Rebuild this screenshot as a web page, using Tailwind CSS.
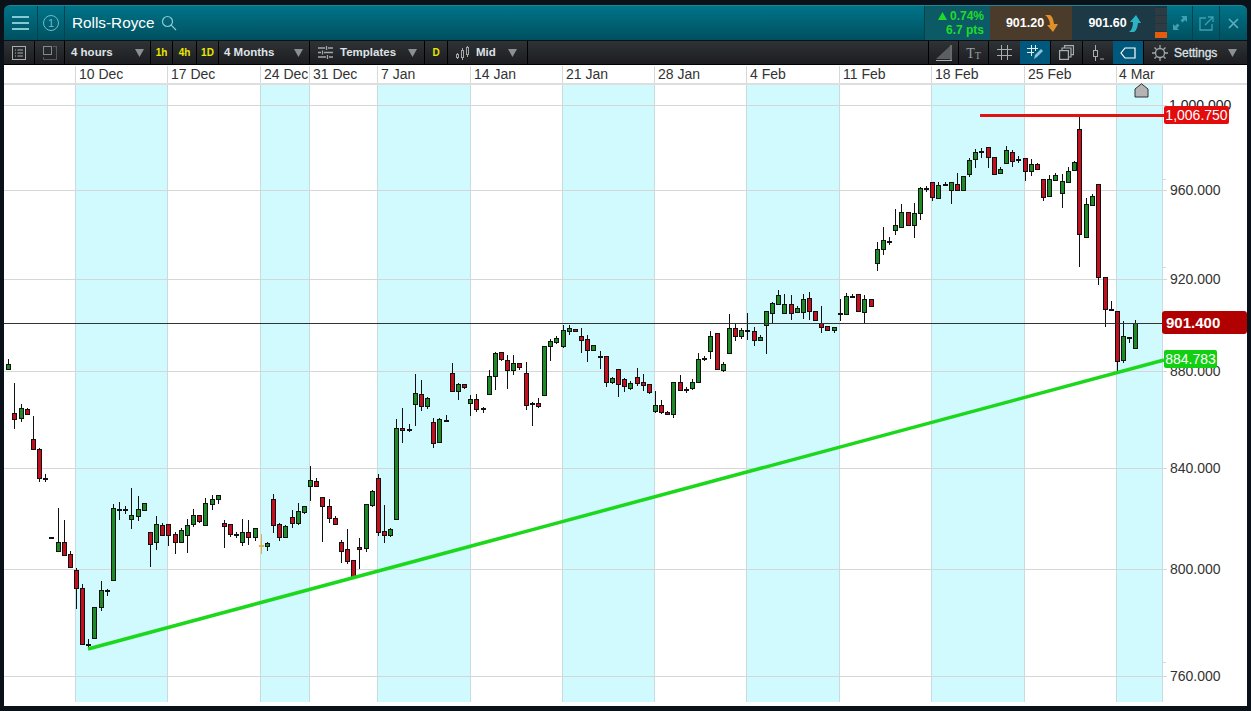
<!DOCTYPE html>
<html lang="en">
<head>
    <meta charset="UTF-8">
    <title>Rolls-Royce 4 hours chart</title>
    <script src="https://cdn.jsdelivr.net/npm/@tailwindcss/browser@4"></script>
</head>
<body class="bg-[#0a1118]">
<div class="w-[1251px] h-[711px] overflow-hidden flex flex-col pt-[5px] pb-[5px] pl-[4px] pr-[4px] font-['Liberation_Sans',Arial,sans-serif]">

    <!-- title bar -->
    <div class="h-[35px] shrink-0 flex rounded-tl-[6px] rounded-tr-[6px] overflow-hidden bg-gradient-to-b from-[#007489] to-[#00505f] border-t border-[#1b8796]">
        <div class="w-[34px] flex items-center justify-center border-r border-[#073f4c]">
            <svg width="17" height="14" viewBox="0 0 17 14" fill="#86c9d3"><rect y="0" width="17" height="2"/><rect y="6" width="17" height="2"/><rect y="12" width="17" height="2"/></svg>
        </div>
        <div class="w-[27px] flex items-center justify-center border-r border-[#073f4c]">
            <div class="w-[16px] h-[16px] rounded-full border border-[#6fbcc8] text-[#6fbcc8] text-[11px] leading-[14px] text-center">1</div>
        </div>
        <div class="pl-[7px] flex items-center text-white text-[15.3px]">Rolls-Royce</div>
        <div class="pl-[7px] flex items-center">
            <svg width="16" height="16" viewBox="0 0 16 16" fill="none" stroke="#8cc8d2" stroke-width="1.2"><circle cx="6.5" cy="6.5" r="5"/><path d="M10.2 10.2 15 15"/></svg>
        </div>
        <div class="flex-1"></div>
        <div class="w-[66px] flex flex-col items-end justify-center pr-[6px] bg-[#0c5a66] font-bold text-[12px] leading-[14px] text-[#1fdc2a] border-l border-[#073f4c]">
            <div class="flex items-center gap-[3px]"><svg width="9" height="8" viewBox="0 0 9 8" fill="#1fdc2a"><path d="M4.5 0 9 8H0z"/></svg>0.74%</div>
            <div>6.7 pts</div>
        </div>
        <div class="w-[82px] flex items-center justify-center gap-[1px] bg-[#4b3b2b] text-white font-bold text-[12.500px] pl-[2px]">
            901.20
            <svg width="13" height="17" viewBox="0 0 13 17" fill="#e0902a"><path d="M0 0h5c2 1 3.500 4 4 9h4l-5 8-6-7 3 0C5 6 3 2 0 0z"/></svg>
        </div>
        <div class="w-[83px] flex items-center justify-center gap-[1px] bg-[#1c3945] text-white font-bold text-[12.500px] pl-[2px]">
            901.60
            <svg width="13" height="17" viewBox="0 0 13 17" fill="#2ab4c4"><path d="M1 17h5c2-1 3.500-4 4-9h3L8 0 2 7l3 0C5 11 4 15 1 17z"/></svg>
        </div>
        <div class="w-[12px] flex flex-col gap-[1px] justify-center bg-[#123a47]">
            <div class="h-[7px] bg-[#2f3b40]"></div>
            <div class="h-[7px] bg-[#2f3b40]"></div>
            <div class="h-[7px] bg-[#2f3b40]"></div>
            <div class="h-[6px] bg-[#e85a0c]"></div>
        </div>
        <div class="w-[26px] flex items-center justify-center border-r border-[#073f4c]">
            <svg width="14" height="14" viewBox="0 0 14 14" fill="#3f9fb0"><path d="M8 0h6v6l-2-2-2.500 2.500-2-2L10 2zM6 14H0V8l2 2 2.500-2.500 2 2L4 12z"/></svg>
        </div>
        <div class="w-[27px] flex items-center justify-center border-r border-[#073f4c]">
            <svg width="15" height="15" viewBox="0 0 15 15" fill="none" stroke="#3f9fb0" stroke-width="1.300"><path d="M7 2H1v12h12V8M6 9l8-8M9 1h5v5"/></svg>
        </div>
        <div class="w-[27px] flex items-center justify-center">
            <svg width="11" height="11" viewBox="0 0 11 11" stroke="#5eb0be" stroke-width="1.600"><path d="M1 1l9 9M10 1l-9 9"/></svg>
        </div>
    </div>

    <!-- toolbar -->
    <div class="h-[24px] mt-[1px] shrink-0 flex items-stretch bg-gradient-to-b from-[#303336] to-[#1b1d20] border-b border-black text-[#dfe3e6] text-[11.500px] font-bold">
        <div class="w-[31px] flex items-center justify-center border-r border-black">
            <svg width="14" height="14" viewBox="0 0 14 14" fill="none" stroke="#a9adb0"><rect x=".5" y=".5" width="13" height="13"/><path d="M3 4h1M5.500 4H11M3 7h1M5.500 7H11M3 10h1M5.500 10H11"/></svg>
        </div>
        <div class="w-[30px] flex items-center justify-center border-r border-black">
            <svg width="14" height="14" viewBox="0 0 14 14" fill="none" stroke="#85898c"><rect x=".5" y=".5" width="8" height="8"/><path d="M10.500 .5h3v13h-13v-3" stroke-dasharray="1 1"/></svg>
        </div>
        <div class="w-[86px] flex items-center justify-between pl-[6px] pr-[6px] border-r border-black">4 hours
            <svg width="9" height="8" viewBox="0 0 9 8" fill="#8b8f92"><path d="M0 0h9L4.500 8z"/></svg>
        </div>
        <div class="w-[22px] flex items-center justify-center border-r border-black text-[#e8e800] text-[10px]">1h</div>
        <div class="w-[24px] flex items-center justify-center border-r border-black text-[#e8e800] text-[10px]">4h</div>
        <div class="w-[22px] flex items-center justify-center border-r border-black text-[#e8e800] text-[10px]">1D</div>
        <div class="w-[91px] flex items-center justify-between pl-[5px] pr-[6px] border-r border-black">4 Months
            <svg width="9" height="8" viewBox="0 0 9 8" fill="#8b8f92"><path d="M0 0h9L4.500 8z"/></svg>
        </div>
        <div class="w-[115px] flex items-center pl-[8px] pr-[7px] border-r border-black">
            <svg width="15" height="13" viewBox="0 0 15 13" stroke="#a3a7aa" stroke-width="1.300"><path d="M0 2h7M10 2h5M8.500 0v4M0 6.500h3M6 6.500h9M4.500 4.500v4M0 11h8M11 11h4M9.500 9v4"/></svg>
            <span class="ml-[7px]">Templates</span>
            <svg class="ml-auto" width="9" height="8" viewBox="0 0 9 8" fill="#8b8f92"><path d="M0 0h9L4.500 8z"/></svg>
        </div>
        <div class="w-[23px] flex items-center justify-center border-r border-black text-[#e8e800] text-[10px]">D</div>
        <div class="w-[80px] flex items-center pl-[7px] pr-[10px] border-r border-black">
            <svg width="15" height="14" viewBox="0 0 15 14" fill="none" stroke="#a3a7aa"><rect x="1.500" y="8.500" width="2" height="3"/><path d="M2.500 7v1M2.500 12v1"/><rect x="6.500" y="4.500" width="2" height="7"/><path d="M7.500 2v2M7.500 12v2"/><rect x="11.500" y="1.500" width="2" height="7"/><path d="M12.500 0v1M12.500 9v2"/></svg>
            <span class="ml-[6px]">Mid</span>
            <svg class="ml-auto" width="9" height="8" viewBox="0 0 9 8" fill="#8b8f92"><path d="M0 0h9L4.500 8z"/></svg>
        </div>
        <div class="flex-1"></div>
        <div class="w-[30px] flex items-center justify-center border-l border-black">
            <svg width="16" height="16" viewBox="0 0 16 16"><path d="M0 14 14 1v13z" fill="#5b5f62"/><path d="M0 15.500h16M15 0v16" stroke="#a9adb0"/></svg>
        </div>
        <div class="w-[30px] flex items-center justify-center border-l border-black font-['Liberation_Serif',serif] font-normal text-[#9a9ea1] text-[14px] pt-[2px]">T<span class="text-[10px] pt-[3px]">T</span></div>
        <div class="w-[32px] flex items-center justify-center border-l border-black">
            <svg width="15" height="15" viewBox="0 0 15 15" stroke="#a9adb0"><path d="M4.500 0v15M10.500 0v15M0 4.500h15M0 10.500h15"/></svg>
        </div>
        <div class="w-[30px] flex items-center justify-center bg-[#00597c]">
            <svg width="17" height="16" viewBox="0 0 17 16"><path d="M4.500 0v11M8.500 0v6M0 3.500h11M0 7.500h7" stroke="#e4eef2"/><path d="M7 14l1-4 6-6 2 2-6 6z" fill="#8fc4da"/></svg>
        </div>
        <div class="w-[32px] flex items-center justify-center border-l border-black">
            <svg width="15" height="15" viewBox="0 0 15 15" fill="none" stroke="#a9adb0" stroke-width="1.200"><rect x=".6" y="5.600" width="8.800" height="8.800"/><path d="M3 5V3h9v9h-2M5.500 2.500V.6h9v9h-2"/></svg>
        </div>
        <div class="w-[31px] flex items-center justify-center border-l border-black">
            <svg width="14" height="16" viewBox="0 0 14 16" fill="none" stroke="#a9adb0"><rect x="2.500" y="5.500" width="4" height="6"/><path d="M4.500 0v5M4.500 12v4M9 14h4" /></svg>
        </div>
        <div class="w-[30px] flex items-center justify-center bg-[#00597c]">
            <svg width="16" height="12" viewBox="0 0 16 12" fill="none" stroke="#ffffff" stroke-width="1.200"><path d="M5 1h10v10H5L1 6z"/></svg>
        </div>
        <div class="flex-1 max-w-[104px] w-[104px] flex items-center pl-[8px] pr-[10px] border-l border-black">
            <svg width="16" height="16" viewBox="0 0 16 16" fill="none" stroke="#a3a7aa" stroke-width="1.300"><circle cx="8" cy="8" r="4.500"/><path d="M8 0v3M8 13v3M0 8h3M13 8h3M2.500 2.500l2 2M11.500 11.500l2 2M13.500 2.500l-2 2M4.500 11.500l-2 2"/></svg>
            <span class="ml-[6px] font-normal text-[12px] [-webkit-text-stroke:0.3px_#dfe3e6]">Settings</span>
            <svg class="ml-auto" width="9" height="8" viewBox="0 0 9 8" fill="#8b8f92"><path d="M0 0h9L4.500 8z"/></svg>
        </div>
    </div>

    <!-- date row -->
    <div class="h-[20px] shrink-0 flex pt-[1px] bg-white border-b-[2px] border-b-[#dedede] text-[14px] leading-[17px] text-[#333]">
        <div class="w-[71px]"></div>
        <div class="w-[92px] pl-[3px] border-l border-[#d8d8d8]">10 Dec</div>
        <div class="w-[93px] pl-[3px] border-l border-[#d8d8d8]">17 Dec</div>
        <div class="w-[49px] pl-[3px] border-l border-[#d8d8d8] whitespace-nowrap">24 Dec</div>
        <div class="w-[68px] pl-[3px] border-l border-[#d8d8d8]">31 Dec</div>
        <div class="w-[93px] pl-[3px] border-l border-[#d8d8d8]">7 Jan</div>
        <div class="w-[92px] pl-[3px] border-l border-[#d8d8d8]">14 Jan</div>
        <div class="w-[92px] pl-[3px] border-l border-[#d8d8d8]">21 Jan</div>
        <div class="w-[92px] pl-[3px] border-l border-[#d8d8d8]">28 Jan</div>
        <div class="w-[93px] pl-[3px] border-l border-[#d8d8d8]">4 Feb</div>
        <div class="w-[92px] pl-[3px] border-l border-[#d8d8d8]">11 Feb</div>
        <div class="w-[93px] pl-[3px] border-l border-[#d8d8d8]">18 Feb</div>
        <div class="w-[92px] pl-[3px] border-l border-[#d8d8d8]">25 Feb</div>
        <div class="flex-1 pl-[2px] border-l border-[#d8d8d8]">4 Mar</div>
    </div>

    <!-- chart -->
    <div class="relative flex-1 bg-white">
        <svg id="plot" class="absolute inset-0" width="1243" height="621" viewBox="4 85 1243 621" shape-rendering="crispEdges"></svg>

        <div class="absolute left-[1165px] top-[12px] text-[14px] leading-[16px] text-[#222]">1,000.000</div>
        <div class="absolute left-[1166px] top-[97px] text-[14px] leading-[16px] text-[#333]">960.000</div>
        <div class="absolute left-[1166px] top-[186px] text-[14px] leading-[16px] text-[#333]">920.000</div>
        <div class="absolute left-[1166px] top-[278px] text-[14px] leading-[16px] text-[#333]">880.000</div>
        <div class="absolute left-[1166px] top-[375px] text-[14px] leading-[16px] text-[#333]">840.000</div>
        <div class="absolute left-[1166px] top-[476px] text-[14px] leading-[16px] text-[#333]">800.000</div>
        <div class="absolute left-[1166px] top-[583px] text-[14px] leading-[16px] text-[#333]">760.000</div>

        <div class="absolute left-[1160px] top-[21px] h-[18px] w-[65px] rounded-[2px] bg-[#e30b0b] text-white text-[14px] leading-[18px] text-center">1,006.750</div>
        <div class="absolute left-[1158px] top-[226px] h-[23px] w-[85px] rounded-[3px] bg-[#b00000] text-white font-bold text-[15px] leading-[23px] pl-[4px]">901.400</div>
        <div class="absolute left-[1160px] top-[265px] h-[18px] w-[53px] rounded-[2px] bg-[#12cf12] text-white text-[14px] leading-[18px] text-center">884.783</div>

        <svg class="absolute left-[1130px] top-[-2px]" width="15" height="15" viewBox="0 0 15 15"><path d="M1 6 7.500 .8 14 6v8H1z" fill="#b4b4b4" stroke="#333"/></svg>
    </div>
</div>

<script>
    // x, wick top, wick bottom, body top, body bottom, kind (page coordinates)
    const candles = [
        [8,359,369,364,369,'g'],[14,383,429,413,419,'r'],[21,404,422,408,418,'g'],[27,408,415,409,414,'r'],
        [33,416,449,439,449,'r'],[39,448,482,449,478,'r'],[45,474,482,478,478,'d'],[51,537,539,537,537,'d'],
        [58,508,552,542,551,'g'],[64,520,556,542,555,'r'],[70,551,567,554,567,'r'],[76,568,609,570,588,'r'],
        [82,584,645,588,644,'r'],[88,639,647,644,644,'d'],[94,607,638,607,638,'g'],[101,581,611,590,607,'g'],
        [107,589,596,590,590,'d'],[113,504,580,508,580,'g'],[119,502,520,509,509,'d'],[125,506,514,509,509,'d'],
        [131,488,529,515,519,'g'],[138,496,521,509,516,'g'],[144,503,511,503,510,'g'],[150,532,567,532,544,'r'],
        [156,516,550,524,542,'g'],[162,523,535,525,535,'r'],[168,524,546,524,535,'r'],[175,532,554,534,542,'r'],
        [181,528,543,530,542,'g'],[187,519,553,525,535,'g'],[193,509,527,515,524,'g'],[199,515,523,515,521,'r'],
        [205,498,525,503,525,'g'],[212,495,510,499,504,'g'],[218,495,504,495,499,'g'],[224,520,548,523,526,'r'],
        [230,524,537,524,534,'r'],[236,532,538,534,534,'d'],[242,519,546,532,542,'g'],[248,520,545,532,537,'r'],
        [255,528,541,528,537,'g'],[261,534,554,545,545,'o'],[267,542,551,543,546,'g'],[273,494,533,499,525,'r'],
        [279,523,541,524,537,'r'],[285,525,537,526,537,'g'],[292,510,528,517,523,'r'],[298,503,525,511,523,'g'],
        [304,506,514,506,512,'g'],[310,466,501,480,486,'g'],[316,478,487,481,486,'r'],[322,497,542,497,506,'r'],
        [329,499,523,506,518,'r'],[335,516,524,518,524,'r'],[341,540,563,542,551,'r'],[347,529,564,549,561,'r'],
        [353,560,576,560,576,'r'],[359,538,569,547,549,'r'],[366,504,552,504,548,'g'],[372,490,507,491,505,'g'],
        [378,474,536,478,532,'r'],[384,505,543,531,535,'r'],[390,528,537,529,535,'g'],[396,419,520,428,519,'g'],
        [402,408,443,428,430,'r'],[409,424,432,429,429,'d'],[415,374,426,393,404,'g'],[421,380,411,394,406,'r'],
        [427,397,409,398,406,'g'],[433,418,448,422,443,'r'],[439,418,443,419,442,'g'],[446,415,422,420,420,'d'],
        [452,363,391,373,391,'r'],[458,383,400,384,391,'g'],[464,384,389,384,387,'r'],[470,395,416,399,403,'g'],
        [476,394,412,399,409,'r'],[483,407,413,408,408,'d'],[489,370,394,376,394,'g'],[495,352,390,353,376,'g'],
        [501,352,361,352,359,'r'],[507,355,389,360,370,'r'],[513,355,375,363,370,'g'],[519,363,370,363,367,'r'],
        [526,362,410,373,405,'r'],[532,402,426,403,403,'d'],[538,398,408,403,406,'r'],[544,346,396,346,395,'g'],
        [550,339,361,341,346,'g'],[556,336,344,338,342,'g'],[563,325,348,330,346,'g'],[569,325,335,328,331,'g'],
        [575,329,331,329,331,'r'],[581,328,353,336,340,'r'],[587,335,362,339,350,'r'],[593,345,350,345,350,'g'],
        [600,351,369,356,356,'d'],[606,356,387,356,382,'r'],[612,377,384,378,382,'g'],[618,369,397,369,384,'r'],
        [624,378,392,379,386,'r'],[630,381,390,383,388,'g'],[637,368,386,377,383,'r'],[643,374,391,382,385,'r'],
        [649,384,394,384,392,'r'],[655,391,413,405,411,'g'],[661,400,414,405,412,'r'],[667,411,414,412,414,'r'],
        [673,382,418,382,414,'g'],[680,375,390,382,390,'r'],[686,387,393,389,389,'d'],[692,379,390,382,388,'g'],
        [698,353,382,359,382,'g'],[704,356,361,358,358,'d'],[710,331,359,336,351,'g'],[717,333,369,333,369,'r'],
        [723,362,372,364,370,'g'],[729,314,353,328,353,'g'],[735,324,341,328,336,'r'],[741,328,339,330,336,'g'],
        [747,313,340,330,330,'d'],[754,327,346,331,340,'r'],[760,335,340,337,340,'g'],[766,311,354,311,325,'g'],
        [772,302,323,303,313,'g'],[778,290,304,295,304,'g'],[784,294,314,304,313,'g'],[791,295,320,304,313,'r'],
        [797,306,312,308,312,'g'],[803,294,319,299,312,'g'],[809,292,320,298,311,'r'],[815,311,320,311,320,'r'],
        [821,306,333,323,327,'r'],[827,326,330,326,330,'r'],[834,327,333,327,330,'g'],[840,299,321,313,313,'d'],
        [846,293,315,296,314,'g'],[852,294,297,296,296,'d'],[858,294,311,294,311,'r'],[864,295,323,299,312,'g'],
        [871,299,306,299,306,'r'],[877,242,271,249,263,'g'],[883,227,255,240,249,'g'],[889,237,245,241,241,'d'],
        [895,209,235,225,230,'g'],[901,204,228,212,227,'g'],[908,212,225,212,225,'r'],[914,203,238,213,225,'g'],
        [920,187,220,188,213,'g'],[926,186,192,188,188,'d'],[932,182,201,182,197,'r'],[938,182,198,185,198,'g'],
        [945,182,186,184,184,'d'],[951,182,204,182,190,'g'],[957,173,190,184,190,'r'],[963,176,190,176,190,'g'],
        [969,158,177,160,174,'g'],[975,149,168,152,159,'g'],[981,148,158,151,151,'d'],[988,147,168,147,157,'r'],
        [994,157,174,157,174,'r'],[1000,167,173,169,173,'g'],[1006,146,163,150,163,'g'],[1012,150,167,152,161,'r'],
        [1018,156,163,159,159,'d'],[1025,158,181,158,171,'r'],[1031,159,176,164,171,'g'],[1037,163,169,164,169,'r'],
        [1043,179,201,179,197,'r'],[1049,175,197,179,196,'g'],[1055,173,181,175,180,'g'],[1062,174,208,181,193,'g'],
        [1068,167,183,171,182,'g'],[1074,161,171,162,170,'g'],[1079,117,267,129,234,'r'],[1086,198,237,204,237,'g'],
        [1092,194,205,196,205,'g'],[1098,184,285,184,277,'r'],[1105,277,327,277,309,'r'],[1111,301,310,309,309,'d'],
        [1117,311,372,311,361,'r'],[1123,321,363,336,360,'g'],[1129,337,343,337,337,'d'],[1135,320,349,323,348,'g']
    ];

    const bandEdges = [75,167,260,309,377,470,562,654,746,839,931,1024,1116,1162];
    const gridRows = [105,190,279,371,468,569,676];
    const fills = { r: '#c4101e', g: '#1c8a26' };

    let out = '';
    for (let i = 0; i < bandEdges.length - 1; i += 2) {
        out += `<rect x="${bandEdges[i]}" y="85" width="${bandEdges[i + 1] - bandEdges[i]}" height="617" fill="#d0fafd"/>`;
    }
    gridRows.forEach(y => {
        out += `<rect x="4" y="${y}" width="1163" height="1" fill="#d6d6d6"/>`;
    });
    bandEdges.forEach(x => {
        out += `<rect x="${x}" y="85" width="1" height="617" fill="#c8dcdf"/>`;
    });
    [179, 267, 662].forEach(y => {
        out += `<rect x="1162" y="${y}" width="4" height="1" fill="#d6d6d6"/>`;
    });

    candles.forEach(([x, top, bottom, bodyTop, bodyBottom, kind]) => {
        if (kind === 'd' || kind === 'o') {
            const color = kind === 'o' ? '#e0b040' : '#111';
            out += `<rect x="${x}" y="${top}" width="1" height="${bottom - top}" fill="${color}"/>`;
            out += `<rect x="${x - 2}" y="${bodyTop}" width="5" height="2" fill="${color}"/>`;
        } else {
            out += `<rect x="${x}" y="${top}" width="1" height="${bottom - top}" fill="#111"/>`;
            out += `<rect x="${x - 2}" y="${bodyTop}" width="5" height="${bodyBottom - bodyTop + 1}" fill="#111"/>`;
            out += `<rect x="${x - 1}" y="${bodyTop + 1}" width="3" height="${Math.max(bodyBottom - bodyTop - 1, 1)}" fill="${fills[kind]}"/>`;
        }
    });

    out += '<rect x="4" y="323" width="1158" height="1" fill="#333"/>';
    out += '<rect x="980" y="114" width="184" height="3" fill="#e01212"/>';
    out += '<line x1="88" y1="649" x2="1164" y2="360" stroke="#1cd81c" stroke-width="3.500" shape-rendering="auto"/>';
    document.getElementById('plot').innerHTML = out;
</script>
</body>
</html>
